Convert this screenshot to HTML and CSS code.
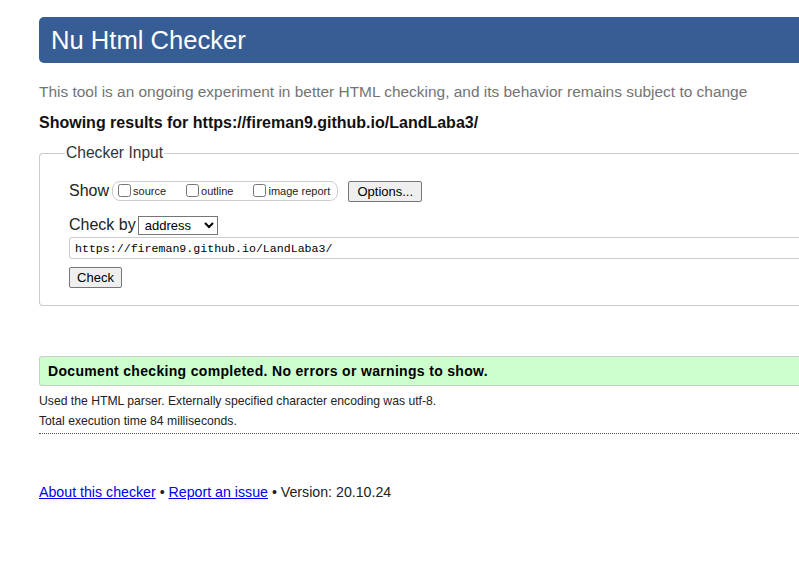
FILE: index.html
```html
<!DOCTYPE html>
<html lang="en">
<head>
<meta charset="utf-8">
<title>Nu Html Checker</title>
<link rel="stylesheet" href="styles.css">
</head>
<body>
<div class="page">
  <h1 class="banner">Nu Html Checker</h1>
  <p class="intro">This tool is an ongoing experiment in better HTML checking, and its behavior remains subject to change</p>
  <p class="showing">Showing results for https://fireman9.github.io/LandLaba3/</p>
  <fieldset class="input-box">
    <legend class="legend">Checker Input</legend>
    <div class="row show-row">
      <span class="row-label">Show</span>
      <span class="opts">
        <label class="opt"><input type="checkbox" class="cb">source</label>
        <label class="opt"><input type="checkbox" class="cb">outline</label>
        <label class="opt"><input type="checkbox" class="cb">image report</label>
      </span>
      <button class="btn options-btn" type="button">Options...</button>
    </div>
    <div class="row by-row">
      <span class="row-label">Check by</span>
      <select class="sel"><option>address</option></select>
    </div>
    <input class="url" type="text" value="https://fireman9.github.io/LandLaba3/">
    <div class="row check-row">
      <button class="btn check-btn" type="button">Check</button>
    </div>
  </fieldset>
  <p class="success">Document checking completed. No errors or warnings to show.</p>
  <p class="detail">Used the HTML parser. Externally specified character encoding was utf-8.</p>
  <p class="detail">Total execution time 84 milliseconds.</p>
  <hr class="dots">
  <p class="footer"><a href="#" class="flink">About this checker</a> • <a href="#" class="flink">Report an issue</a> • Version: 20.10.24</p>
</div>
</body>
</html>
```
FILE: styles.css
```css
html, body {
  margin: 0;
  padding: 0;
  overflow: hidden;
  background: #fff;
}
body {
  font-family: "Liberation Sans", Arial, sans-serif;
  color: #222;
}
.page {
  width: 1000px;
  padding: 17px 0 0 39px;
}
.banner {
  margin: 0;
  height: 46px;
  box-sizing: border-box;
  padding: 0 0 0 12px;
  background: #365d95;
  color: #fff;
  font-size: 25.6px;
  font-weight: normal;
  line-height: 47px;
  border-radius: 5px 0 0 5px;
}
.intro {
  margin: 19px 0 0 0;
  font-size: 15.45px;
  line-height: 20px;
  color: #737373;
}
.showing {
  margin: 11px 0 0 0;
  font-size: 16px;
  line-height: 20px;
  font-weight: bold;
  color: #111;
}
.input-box {
  margin: 11px 0 0 0;
  border: 1px solid #ccc;
  border-right: none;
  border-radius: 4px 0 0 4px;
  padding: 3px 0 17px 29px;
  min-width: 0;
}
.legend {
  font-size: 15.6px;
  color: #333;
  padding: 0 1px;
  margin-left: -4px;
  line-height: 18px;
}
.row {
  display: flex;
  align-items: center;
}
.row-label {
  font-size: 16px;
  color: #222;
  line-height: 18px;
}
.show-row {
  height: 22px;
  margin-top: 15px;
}
.opts {
  display: inline-flex;
  align-items: center;
  margin-left: 3px;
  height: 18px;
  border: 1px solid #ccc;
  border-radius: 8px;
  padding: 0 7px 0 5px;
  gap: 20px;
}
.opt {
  display: inline-flex;
  align-items: center;
  font-size: 11px;
  color: #222;
}
.cb {
  margin: 0 2px 2px 0;
  width: 13px;
  height: 13px;
}
.btn {
  font-family: "Liberation Sans", Arial, sans-serif;
  font-size: 13px;
  background: #efefef;
  border: 1px solid #767676;
  border-radius: 2px;
  height: 21px;
  padding: 0 6px;
  color: #000;
}
.options-btn {
  margin-left: 10px;
  width: 74px;
}
.by-row {
  margin-top: 13px;
  height: 20px;
}
.sel {
  margin-left: 2px;
  width: 80px;
  height: 19px;
  font-family: "Liberation Sans", Arial, sans-serif;
  font-size: 13px;
  border: 1px solid #767676;
  border-radius: 0;
  background: #fff;
  padding: 0 2px;
}
.url {
  display: block;
  margin: 2px 0 0 0;
  width: 900px;
  height: 22px;
  box-sizing: border-box;
  border: 1px solid #ccc;
  border-radius: 3px;
  padding: 0 5px;
  font-family: "Liberation Mono", "DejaVu Sans Mono", monospace;
  font-size: 11.6px;
  color: #000;
}
.check-row {
  margin-top: 8px;
}
.check-btn {
  width: 53px;
}
.success {
  margin: 50px 0 0 0;
  height: 30px;
  box-sizing: border-box;
  background: #ccffcc;
  border: 1px solid #ccc;
  border-right: none;
  border-radius: 3px 0 0 3px;
  padding: 0 0 0 8px;
  font-size: 14px;
  font-weight: bold;
  line-height: 28px;
  color: #000;
  letter-spacing: 0.32px;
}
.detail {
  margin: 0;
  font-size: 12.2px;
  line-height: 20px;
  color: #222;
}
.success + .detail {
  margin-top: 5px;
}
.dots {
  margin: 2px 0 0 0;
  border: none;
  border-top: 1px dotted #555;
  height: 0;
}
.footer {
  margin: 49px 0 0 0;
  font-size: 14.2px;
  line-height: 18px;
  color: #222;
}
.flink {
  color: #00e;
  text-decoration: underline;
}
```
